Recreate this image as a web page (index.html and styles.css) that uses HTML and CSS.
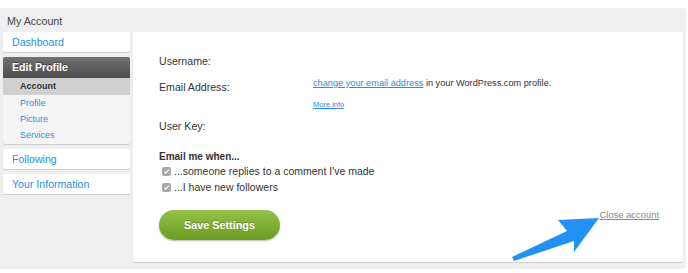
FILE: index.html
```html
<!DOCTYPE html>
<html lang="en">
<head>
    <meta charset="UTF-8">
    <title>My Account</title>
    <link rel="stylesheet" href="styles.css">
</head>
<body>
    <div class="account">
        <p class="account-title">My Account</p>

        <div class="account-body">
            <div class="sidebar">
                <a class="side-box" href="#">Dashboard</a>

                <div class="side-group">
                    <p class="side-group-title">Edit Profile</p>
                    <p class="side-sub side-sub-active">Account</p>
                    <a class="side-sub" href="#">Profile</a>
                    <a class="side-sub" href="#">Picture</a>
                    <a class="side-sub" href="#">Services</a>
                </div>

                <a class="side-box" href="#">Following</a>
                <a class="side-box" href="#">Your Information</a>
            </div>

            <div class="panel">
                <div class="field field-username">
                    <span class="field-label">Username:</span>
                </div>
                <div class="field field-email">
                    <span class="field-label">Email Address:</span>
                    <div class="field-value">
                        <p class="email-text"><a href="#">change your email address</a> in your WordPress.com profile.</p>
                        <a class="more-info" href="#">More info</a>
                    </div>
                </div>
                <div class="field field-key">
                    <span class="field-label">User Key:</span>
                </div>

                <p class="email-heading">Email me when...</p>
                <label class="check-row"><span class="check"><svg width="9" height="9" viewBox="0 0 9 9"><path d="M2.2 4.7 L3.8 6.2 L6.8 2.6" fill="none" stroke="#fff" stroke-width="1.1"/></svg></span>...someone replies to a comment I've made</label>
                <label class="check-row"><span class="check"><svg width="9" height="9" viewBox="0 0 9 9"><path d="M2.2 4.7 L3.8 6.2 L6.8 2.6" fill="none" stroke="#fff" stroke-width="1.1"/></svg></span>...I have new followers</label>

                <div class="panel-bottom">
                    <button class="save-button">Save Settings</button>
                    <a class="close-account" href="#">Close account</a>
                </div>

                <svg class="pointer-arrow" width="100" height="50" viewBox="0 0 100 50">
                    <polygon points="88,1 47,3 56,14 1,40 3,44 63,24 63,35" fill="#2291f5"/>
                </svg>
            </div>
        </div>
    </div>
</body>
</html>
```

FILE: styles.css
```css
body{
    margin: 0;
    padding-top: 8px;
    background-color: white;
    font-family: "Liberation Sans", Arial, Helvetica, sans-serif;
    color: #333;
}
p{
    margin: 0;
}
a{
    color: #2a8ee2;
}
.account{
    width: 686px;
    height: 261px;
    background-color: #efefef;
    border-radius: 0 4px 4px 0;
}
.account-title{
    font-size: 10.7px;
    color: #444;
    padding: 7px 0 0 7px;
    height: 17px;
}
.account-body{
    display: flex;
    gap: 3px;
    padding-left: 3px;
}
.sidebar{
    display: flex;
    flex-direction: column;
    gap: 5px;
    width: 127px;
}
.side-box{
    display: block;
    height: 20px;
    line-height: 21px;
    padding-left: 9px;
    background-color: white;
    border-radius: 2px;
    box-shadow: 0 1px 1px rgba(0,0,0,0.15);
    font-size: 10.6px;
    color: #2a8ee2;
    text-decoration: none;
}
.side-group{
    background-color: #f5f5f5;
    border-radius: 2px;
    box-shadow: 0 1px 1px rgba(0,0,0,0.15);
    padding-bottom: 1px;
}
.side-group-title{
    height: 21px;
    line-height: 21px;
    padding-left: 9px;
    background: linear-gradient(#727272, #4d4d4d);
    border-radius: 2px 2px 0 0;
    color: white;
    font-size: 10.6px;
    font-weight: bold;
    text-shadow: 0 -1px 0 rgba(0,0,0,0.4);
}
.side-sub{
    display: block;
    height: 16px;
    line-height: 16px;
    padding-left: 17px;
    font-size: 9px;
    color: #2a8ee2;
    text-decoration: none;
}
.side-sub-active{
    height: 17px;
    line-height: 17px;
    background-color: #d0d0d0;
    color: #333;
    font-weight: bold;
}
.panel{
    position: relative;
    width: 524px;
    height: 230px;
    padding-left: 26px;
    background-color: white;
    border-radius: 2px;
    box-shadow: 0 1px 1px rgba(0,0,0,0.15);
}
.field{
    display: flex;
}
.field-label{
    width: 154px;
    font-size: 10.6px;
    color: #333;
}
.field-username{
    padding-top: 23px;
}
.field-email{
    padding-top: 11px;
}
.field-email .field-label{
    padding-top: 3px;
}
.email-text{
    font-size: 9.2px;
    color: #333;
}
.more-info{
    display: inline-block;
    margin-top: 12px;
    font-size: 7.5px;
}
.field-key{
    padding-top: 9px;
}
.email-heading{
    margin-top: 19px;
    margin-bottom: 1px;
    font-size: 10px;
    font-weight: bold;
}
.check-row{
    display: flex;
    align-items: center;
    gap: 3px;
    height: 16px;
    padding-left: 3px;
    font-size: 10.5px;
    color: #333;
}
.check{
    display: flex;
    width: 9px;
    height: 9px;
    background-color: #a9a9a9;
    border-radius: 2px;
}
.panel-bottom{
    display: flex;
    justify-content: space-between;
    align-items: flex-start;
    width: 500px;
    margin-top: 15px;
}
.save-button{
    width: 121px;
    height: 30px;
    border: none;
    border-radius: 15px;
    background: linear-gradient(#93c247, #6a9b22);
    box-shadow: 0 1px 2px rgba(0,0,0,0.3);
    color: white;
    font-family: "Liberation Sans", Arial, sans-serif;
    font-size: 10.8px;
    font-weight: bold;
    text-shadow: 0 -1px 0 rgba(0,0,0,0.25);
}
.close-account{
    margin-top: -1px;
    font-size: 9.4px;
    color: #888;
}
.pointer-arrow{
    position: absolute;
    left: 378px;
    top: 185px;
}
```
